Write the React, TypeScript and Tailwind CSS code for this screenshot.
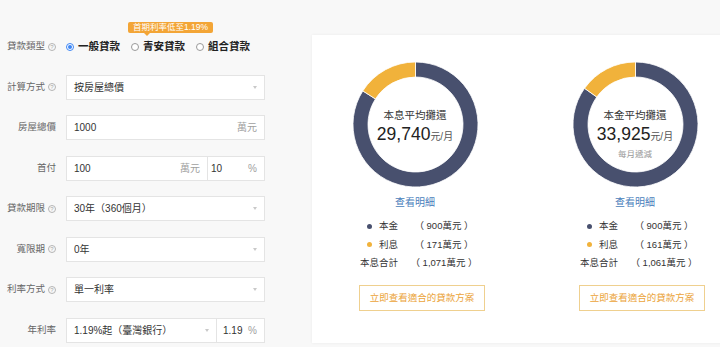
import React from "react";

function Help() {
  return (
    <span className="ml-[3px] inline-flex h-[8px] w-[8px] items-center justify-center rounded-full border border-[#b5b5b5] text-[6px] leading-none text-[#aaa]">
      ?
    </span>
  );
}

function Label({ text, help }: { text: string; help?: boolean }) {
  return (
    <div className="flex w-[56px] shrink-0 items-center justify-end text-[9.5px] text-[#666]">
      {text}
      {help && <Help />}
    </div>
  );
}

function Caret() {
  return (
    <span className="ml-auto h-0 w-0 border-x-[2.5px] border-t-[3px] border-x-transparent border-t-[#c9c9c9]" />
  );
}

function SelectBox({ value }: { value: string }) {
  return (
    <div className="ml-[10px] flex h-[25px] w-[199px] items-center border border-[#e4e4e4] bg-white pl-[7px] pr-[7px] text-[10px] text-[#333]">
      {value}
      <Caret />
    </div>
  );
}

function Radio({ label, checked }: { label: string; checked?: boolean }) {
  return (
    <div className="flex items-center gap-[4px]">
      {checked ? (
        <span className="flex h-[8px] w-[8px] items-center justify-center rounded-full border border-[#3d86f5] bg-white">
          <span className="h-[4px] w-[4px] rounded-full bg-[#3d86f5]" />
        </span>
      ) : (
        <span className="h-[8px] w-[8px] rounded-full border border-[#9a9a9a] bg-white" />
      )}
      <span className="text-[10.5px] font-bold text-[#222]">{label}</span>
    </div>
  );
}

function point(c: number, r: number, deg: number) {
  const a = (deg * Math.PI) / 180;
  return [c + r * Math.sin(a), c - r * Math.cos(a)];
}

function sector(c: number, R: number, r: number, a0: number, a1: number) {
  const large = a1 - a0 > 180 ? 1 : 0;
  const [x0, y0] = point(c, R, a0);
  const [x1, y1] = point(c, R, a1);
  const [x2, y2] = point(c, r, a1);
  const [x3, y3] = point(c, r, a0);
  return `M${x0} ${y0} A${R} ${R} 0 ${large} 1 ${x1} ${y1} L${x2} ${y2} A${r} ${r} 0 ${large} 0 ${x3} ${y3} Z`;
}

function Donut({
  title,
  amount,
  principal,
  interest,
  sub,
}: {
  title: string;
  amount: string;
  principal: number;
  interest: number;
  sub?: string;
}) {
  const split = 360 * (principal / (principal + interest));
  return (
    <div className="relative mr-[14px] h-[125px] w-[125px]">
      <svg width="125" height="125" viewBox="0 0 125 125">
        <path d={sector(62.5, 62.5, 47.5, 0, split)} fill="#48506e" stroke="#fff" strokeWidth="0.8" />
        <path d={sector(62.5, 62.5, 47.5, split, 360)} fill="#f1b23b" stroke="#fff" strokeWidth="0.8" />
      </svg>
      <div className="absolute inset-x-0 top-[46px] flex flex-col items-center">
        <div className="text-[10.5px] leading-[14px] text-[#333]">{title}</div>
        <div className="mt-[2px] flex items-baseline leading-[20px] text-[#222]">
          <span className="text-[17.5px]">{amount}</span>
          <span className="text-[10px] text-[#555]">元/月</span>
        </div>
        {sub && <div className="mt-[1px] text-[8.5px] leading-[12px] text-[#999]">{sub}</div>}
      </div>
    </div>
  );
}

function ResultColumn({
  title,
  amount,
  interest,
  total,
  interestNum,
  totalNum,
  sub,
}: {
  title: string;
  amount: string;
  interest: string;
  total: string;
  interestNum: number;
  totalNum: number;
  sub?: string;
}) {
  return (
    <div className="flex w-[220px] shrink-0 flex-col items-center pt-[27px]">
      <Donut title={title} amount={amount} principal={totalNum - interestNum} interest={interestNum} sub={sub} />
      <div className="mr-[14px] mt-[9px] text-[10px] leading-[14px] text-[#4a7ebb]">查看明細</div>
      <div className="mr-[7px] mt-[7px] grid grid-cols-[36px_62px] gap-x-[15px] text-[9.5px] text-[#333]">
        <div className="flex h-[18.5px] items-center justify-end gap-[7px]">
          <span className="h-[5px] w-[5px] rounded-full bg-[#48506e]" />
          本金
        </div>
        <div className="flex h-[18.5px] items-center justify-center whitespace-pre">（ 900萬元 ）</div>
        <div className="flex h-[18.5px] items-center justify-end gap-[7px]">
          <span className="h-[5px] w-[5px] rounded-full bg-[#f1b23b]" />
          利息
        </div>
        <div className="flex h-[18.5px] items-center justify-center whitespace-pre">（ {interest}萬元 ）</div>
        <div className="flex h-[18.5px] items-center justify-end whitespace-nowrap">本息合計</div>
        <div className="flex h-[18.5px] items-center justify-center whitespace-pre">（ {total}萬元 ）</div>
      </div>
      <div className="mt-[12.5px] flex h-[26px] w-[126px] items-center justify-center border border-[#efd08f] text-[9.5px] text-[#eba43a]">
        立即查看適合的貸款方案
      </div>
    </div>
  );
}

export default function App() {
  return (
    <div className="flex h-[347px] w-[720px] overflow-hidden bg-[#f8f8f8] font-['Liberation_Sans','Noto_Sans_CJK_TC',sans-serif]">
      <div className="flex w-[312px] shrink-0 flex-col gap-[15.5px] pt-[34px]">
        <div className="flex h-[25px] items-center">
          <Label text="貸款類型" help />
          <div className="ml-[10px] flex items-center gap-[11px]">
            <Radio label="一般貸款" checked />
            <div className="relative">
              <div className="absolute bottom-[18px] left-[-3px] whitespace-nowrap">
                <div className="rounded-[2px] bg-[#f3a536] px-[5px] text-[8.5px] leading-[11px] text-white">
                  首期利率低至1.19%
                </div>
                <div className="ml-[16px] h-0 w-0 border-x-[3px] border-t-[3px] border-x-transparent border-t-[#f3a536]" />
              </div>
              <Radio label="青安貸款" />
            </div>
            <Radio label="組合貸款" />
          </div>
        </div>
        <div className="flex h-[25px] items-center">
          <Label text="計算方式" help />
          <SelectBox value="按房屋總價" />
        </div>
        <div className="flex h-[25px] items-center">
          <Label text="房屋總價" />
          <div className="ml-[10px] flex h-[25px] w-[199px] items-center border border-[#e4e4e4] bg-white px-[7px] text-[10px] text-[#333]">
            1000
            <span className="ml-auto text-[#a0a0a0]">萬元</span>
          </div>
        </div>
        <div className="flex h-[25px] items-center">
          <Label text="首付" />
          <div className="ml-[10px] flex h-[25px] w-[199px] items-center border border-[#e4e4e4] bg-white text-[10px] text-[#333]">
            <div className="flex h-full w-[141px] items-center border-r border-[#e4e4e4] px-[7px]">
              100
              <span className="ml-auto text-[#a0a0a0]">萬元</span>
            </div>
            <div className="flex h-full flex-1 items-center pl-[3px] pr-[7px]">
              10
              <span className="ml-auto text-[#a0a0a0]">%</span>
            </div>
          </div>
        </div>
        <div className="flex h-[25px] items-center">
          <Label text="貸款期限" help />
          <SelectBox value="30年（360個月）" />
        </div>
        <div className="flex h-[25px] items-center">
          <Label text="寬限期" help />
          <SelectBox value="0年" />
        </div>
        <div className="flex h-[25px] items-center">
          <Label text="利率方式" help />
          <SelectBox value="單一利率" />
        </div>
        <div className="flex h-[25px] items-center">
          <Label text="年利率" />
          <div className="ml-[10px] flex h-[25px] w-[199px] items-center border border-[#e4e4e4] bg-white text-[10px] text-[#333]">
            <div className="flex h-full w-[150px] items-center border-r border-[#e4e4e4] px-[7px]">
              1.19%起（臺灣銀行）
              <Caret />
            </div>
            <div className="flex h-full flex-1 items-center pl-[6px] pr-[7px]">
              1.19
              <span className="ml-auto text-[#a0a0a0]">%</span>
            </div>
          </div>
        </div>
      </div>
      <div className="mt-[35px] flex h-[308px] w-[460px] shrink-0 bg-white shadow-[0_0_3px_rgba(0,0,0,0.06)]">
        <ResultColumn
          title="本息平均攤還"
          amount="29,740"
          interest="171"
          total="1,071"
          interestNum={171}
          totalNum={1071}
        />
        <ResultColumn
          title="本金平均攤還"
          amount="33,925"
          interest="161"
          total="1,061"
          interestNum={161}
          totalNum={1061}
          sub="每月遞減"
        />
      </div>
    </div>
  );
}
